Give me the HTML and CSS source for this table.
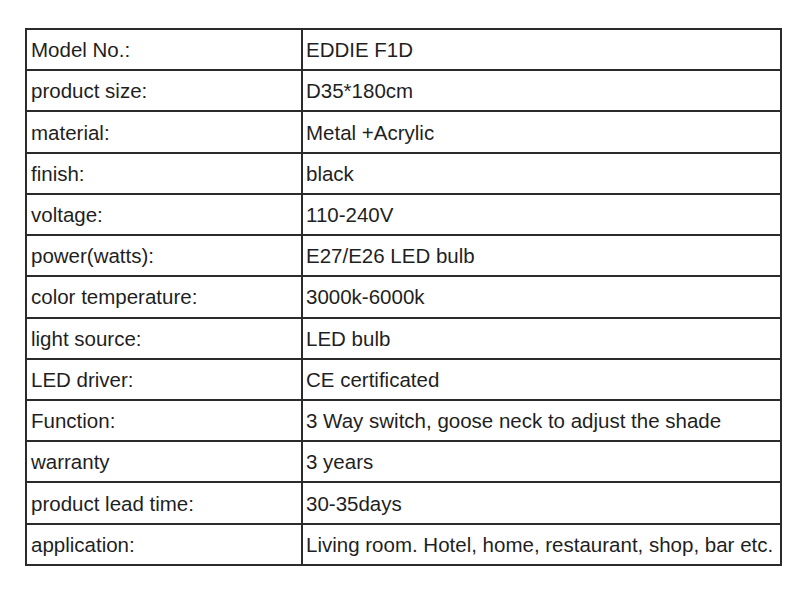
FILE: index.html
```html
<!DOCTYPE html>
<html>
<head>
<meta charset="utf-8">
<link rel="stylesheet" href="styles.css">
</head>
<body>
<div class="spec">
  <div class="cell key">Model No.:</div><div class="cell val">EDDIE F1D</div>
  <div class="cell key">product size:</div><div class="cell val">D35*180cm</div>
  <div class="cell key">material:</div><div class="cell val">Metal +Acrylic</div>
  <div class="cell key">finish:</div><div class="cell val">black</div>
  <div class="cell key">voltage:</div><div class="cell val">110-240V</div>
  <div class="cell key">power(watts):</div><div class="cell val">E27/E26 LED bulb</div>
  <div class="cell key">color temperature:</div><div class="cell val">3000k-6000k</div>
  <div class="cell key">light source:</div><div class="cell val">LED bulb</div>
  <div class="cell key">LED driver:</div><div class="cell val">CE certificated</div>
  <div class="cell key">Function:</div><div class="cell val">3 Way switch, goose neck to adjust the shade</div>
  <div class="cell key">warranty</div><div class="cell val">3 years</div>
  <div class="cell key">product lead time:</div><div class="cell val">30-35days</div>
  <div class="cell key">application:</div><div class="cell val">Living room. Hotel, home, restaurant, shop, bar etc.</div>
</div>
</body>
</html>
```

FILE: styles.css
```css
html, body {
  margin: 0;
  padding: 0;
  background: #ffffff;
}
.spec {
  margin: 28px 0 0 25px;
  width: 757px;
  box-sizing: border-box;
  display: grid;
  grid-template-columns: 276px 479px;
  grid-template-rows: repeat(13, 41.23px);
  border-top: 2px solid #2b2b2b;
  border-left: 2px solid #2b2b2b;
  font-family: "Liberation Sans", Arial, sans-serif;
  font-size: 20.5px;
  color: #1f1f1f;
}
.cell {
  box-sizing: border-box;
  border-right: 2px solid #2b2b2b;
  border-bottom: 2px solid #2b2b2b;
  display: flex;
  align-items: center;
  padding: 1px 0 0 4px;
  white-space: nowrap;
  overflow: hidden;
}
.val {
  padding-left: 3px;
}
```
